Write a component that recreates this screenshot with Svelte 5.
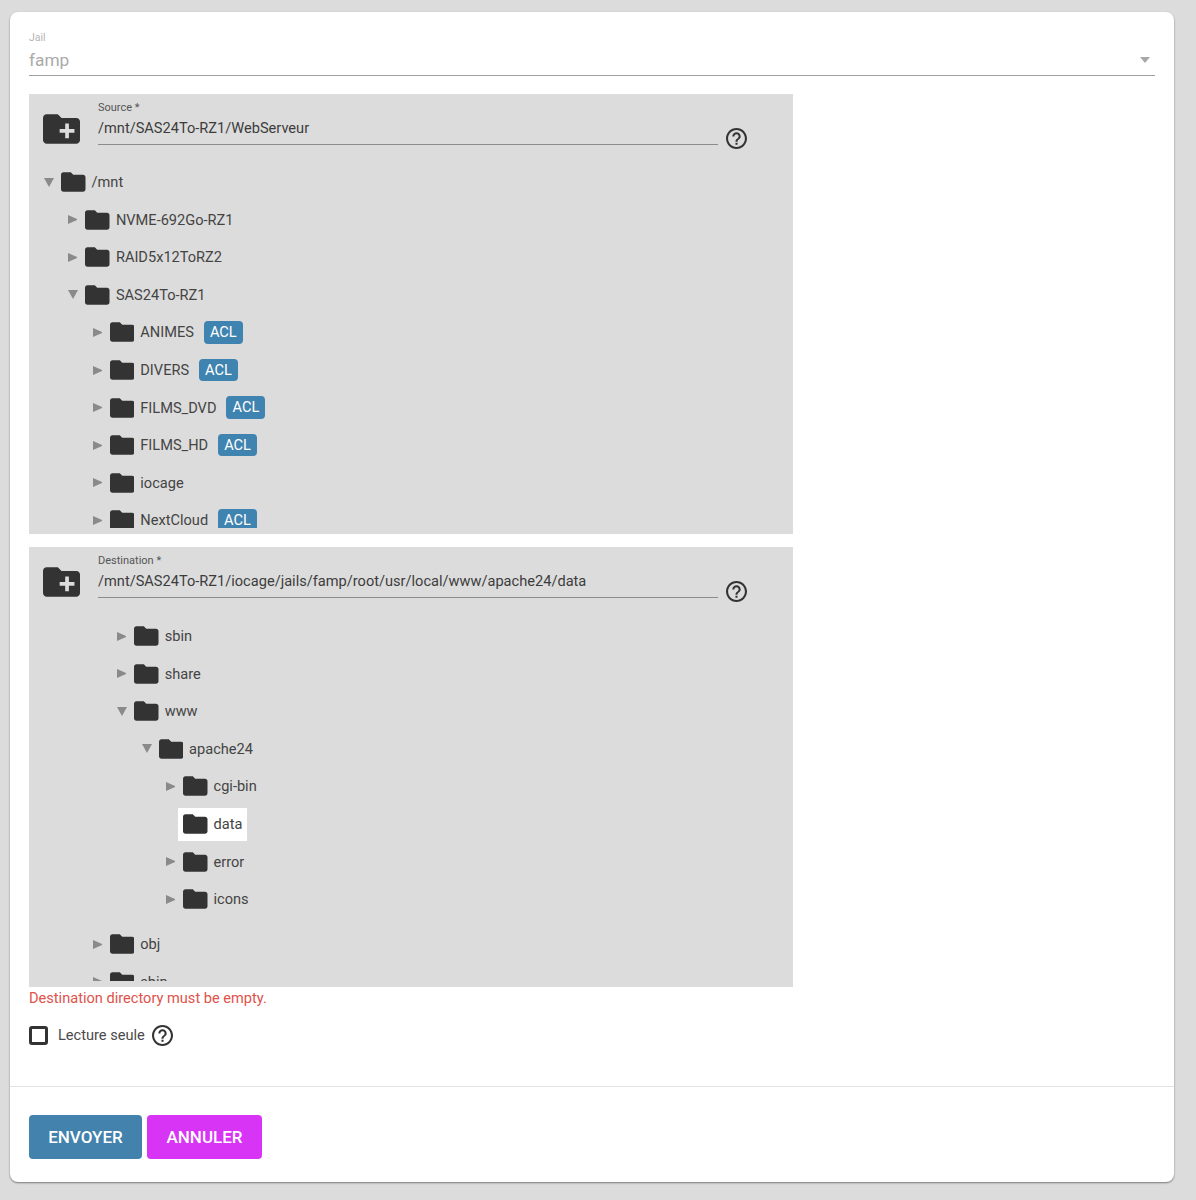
<script lang="ts">
	type Row = { name: string; depth: number; open?: boolean; leaf?: boolean; acl?: boolean; selected?: boolean; gap?: boolean }

	const sourceRows: Row[] = [
		{ name: '/mnt', depth: 0, open: true },
		{ name: 'NVME-692Go-RZ1', depth: 1 },
		{ name: 'RAID5x12ToRZ2', depth: 1 },
		{ name: 'SAS24To-RZ1', depth: 1, open: true },
		{ name: 'ANIMES', depth: 2, acl: true },
		{ name: 'DIVERS', depth: 2, acl: true },
		{ name: 'FILMS_DVD', depth: 2, acl: true },
		{ name: 'FILMS_HD', depth: 2, acl: true },
		{ name: 'iocage', depth: 2 },
		{ name: 'NextCloud', depth: 2, acl: true }
	]

	const destRows: Row[] = [
		{ name: 'sbin', depth: 3 },
		{ name: 'share', depth: 3 },
		{ name: 'www', depth: 3, open: true },
		{ name: 'apache24', depth: 4, open: true },
		{ name: 'cgi-bin', depth: 5 },
		{ name: 'data', depth: 5, leaf: true, selected: true },
		{ name: 'error', depth: 5 },
		{ name: 'icons', depth: 5 },
		{ name: 'obj', depth: 2, gap: true },
		{ name: 'sbin', depth: 2 }
	]

	const helpPath = 'M11 18h2v-2h-2v2zm1-16C6.48 2 2 6.48 2 12s4.48 10 10 10 10-4.48 10-10S17.52 2 12 2zm0 18c-4.41 0-8-3.59-8-8s3.59-8 8-8 8 3.59 8 8-3.59 8-8 8zm0-14c-2.21 0-4 1.79-4 4h2c0-1.1.9-2 2-2s2 .9 2 2c0 2-3 1.75-3 5h2c0-2.25 3-2.5 3-5 0-2.21-1.79-4-4-4z'
</script>

{#snippet help()}
	<svg class="help" viewBox="2 2 20 20"><path d={helpPath} /></svg>
{/snippet}

{#snippet explorer(label: string, value: string, rows: Row[], offset: number)}
	<section class="explorer">
		<div class="head">
			<svg class="new-folder" viewBox="2 4 20 16">
				<path d="M20 6h-8l-2-2H4c-1.11 0-1.99.89-1.99 2L2 18c0 1.11.89 2 2 2h16c1.11 0 2-.89 2-2V8c0-1.11-.89-2-2-2zm-1 8h-3v3h-2v-3h-3v-2h3V9h2v3h3v2z" />
			</svg>
			<div class="path">
				<span class="path-label">{label}</span>
				<span class="path-value">{value}</span>
			</div>
			{@render help()}
		</div>
		<div class="tree">
			<div class="tree-inner" style="padding-top: {offset}px">
				{#each rows as row}
					<div class="row" class:gap={row.gap} style="padding-left: {row.depth * 24.4}px">
						<span class="arrow" class:open={row.open} class:leaf={row.leaf}></span>
						<div class="node" class:selected={row.selected}>
							<svg class="folder" viewBox="2 4 20 16">
								<path d="M10 4H4c-1.1 0-1.99.9-1.99 2L2 18c0 1.1.9 2 2 2h16c1.1 0 2-.9 2-2V8c0-1.1-.9-2-2-2h-8l-2-2z" />
							</svg>
							<span class="name">{row.name}</span>
						</div>
						{#if row.acl}
							<span class="acl">ACL</span>
						{/if}
					</div>
				{/each}
			</div>
		</div>
	</section>
{/snippet}

<main class="card">
	<div class="form">
		<div class="jail">
			<span class="jail-label">Jail</span>
			<div class="jail-value">
				<span>famp</span>
				<span class="caret"></span>
			</div>
		</div>

		{@render explorer('Source *', '/mnt/SAS24To-RZ1/WebServeur', sourceRows, 1)}
		{@render explorer('Destination *', '/mnt/SAS24To-RZ1/iocage/jails/famp/root/usr/local/www/apache24/data', destRows, 2)}

		<p class="error">Destination directory must be empty.</p>

		<div class="readonly">
			<span class="checkbox"></span>
			<span>Lecture seule</span>
			{@render help()}
		</div>
	</div>

	<div class="actions">
		<button class="send">ENVOYER</button>
		<button class="cancel">ANNULER</button>
	</div>
</main>

<style>
	:global(body) {
		background: #dcdcdc;
		font-family: Roboto, sans-serif;
		color: #3a3a3a;
	}

	.card {
		box-sizing: border-box;
		height: 1170px;
		margin: 12px 22px 18px 10px;
		background: #fff;
		border-radius: 8px;
		box-shadow: 0 1px 2px rgba(0, 0, 0, 0.45);
	}

	.form {
		height: 1075px;
		box-sizing: border-box;
		padding: 19px 19px 0;
		border-bottom: 1px solid #e2e2e2;
	}

	.jail {
		width: 1126px;
		height: 44px;
		margin-bottom: 18px;
		border-bottom: 1px solid #a0a0a0;
	}

	.jail-label {
		display: block;
		height: 14px;
		font-size: 10.5px;
		line-height: 14px;
		color: #b5b5b5;
	}

	.jail-value {
		display: flex;
		align-items: center;
		justify-content: space-between;
		height: 30px;
		padding-right: 5px;
		font-size: 17.3px;
		color: #aaa;
	}

	.caret {
		width: 0;
		height: 0;
		margin-top: -1px;
		border-left: 5.5px solid transparent;
		border-right: 5.5px solid transparent;
		border-top: 6px solid #a8a8a8;
	}

	.explorer {
		width: 764px;
		height: 440px;
		margin-bottom: 13px;
		background: #dcdcdc;
	}

	.explorer + .explorer {
		margin-bottom: 0;
	}

	.head {
		display: flex;
		align-items: flex-start;
		height: 68px;
		padding-left: 14px;
	}

	.new-folder {
		width: 37px;
		height: 30px;
		margin: 20px 18px 0 0;
		fill: #333;
	}

	.path {
		display: flex;
		flex-direction: column;
		width: 620px;
		height: 50px;
		margin-right: 8px;
		border-bottom: 1px solid #8c8c8c;
	}

	.path-label {
		margin-top: 7px;
		font-size: 11px;
		line-height: 14px;
		color: #555;
	}

	.path-value {
		margin-top: 3px;
		font-size: 14.6px;
		line-height: 20px;
		color: #3c3c3c;
	}

	.help {
		flex: none;
		width: 21px;
		height: 21px;
		fill: #333;
	}

	.head .help {
		margin-top: 34px;
	}

	.tree {
		height: 365px;
		margin-top: 0.5px;
		padding-left: 15px;
		overflow: hidden;
	}

	.row {
		display: flex;
		align-items: center;
		height: 37.55px;
		font-size: 14.6px;
		color: #444;
	}

	.row.gap {
		margin-top: 7.5px;
	}

	.arrow {
		flex: none;
		box-sizing: border-box;
		width: 12px;
		height: 9px;
		border-left: 9px solid #8a8a8a;
		border-top: 4.5px solid transparent;
		border-bottom: 4.5px solid transparent;
	}

	.arrow.open {
		width: 10px;
		margin-right: 2px;
		border-top: 9px solid #8a8a8a;
		border-left: 5px solid transparent;
		border-right: 5px solid transparent;
		border-bottom: 0;
	}

	.arrow.leaf {
		border-color: transparent;
	}

	.node {
		display: flex;
		align-items: center;
		gap: 6px;
		height: 33px;
		padding: 0 5px;
	}

	.node.selected {
		background: #fff;
	}

	.folder {
		flex: none;
		width: 24.5px;
		height: 20px;
		fill: #333;
	}

	.acl {
		margin-left: 5px;
		padding: 0 6px;
		height: 22.5px;
		line-height: 22.5px;
		border-radius: 4px;
		background: #3f83b0;
		color: #fff;
		font-size: 14.6px;
	}

	.error {
		margin: 3px 0 0;
		font-size: 14.6px;
		line-height: 17px;
		color: #e0524a;
	}

	.readonly {
		display: flex;
		align-items: center;
		gap: 7px;
		margin-top: 17px;
		height: 22px;
		font-size: 14.6px;
		color: #4a4a4a;
	}

	.checkbox {
		box-sizing: border-box;
		width: 19px;
		height: 19px;
		margin-right: 3px;
		border: 3px solid #333;
		border-radius: 3px;
	}

	.actions {
		display: flex;
		gap: 5px;
		padding: 28px 19px 0;
	}

	button {
		height: 44px;
		border: 0;
		border-radius: 4px;
		color: #fff;
		font-family: inherit;
		font-size: 17px;
		font-weight: 500;
	}

	.send {
		width: 113px;
		background: #4282ad;
	}

	.cancel {
		width: 115px;
		background: #d834f5;
	}
</style>
